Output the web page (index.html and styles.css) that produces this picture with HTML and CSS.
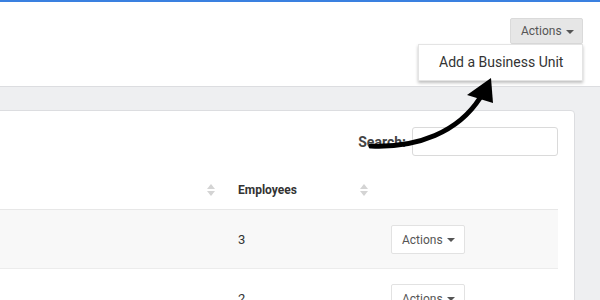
FILE: index.html
```html
<!DOCTYPE html>
<html lang="en">
<head>
    <meta charset="UTF-8">
    <meta name="viewport" content="width=device-width, initial-scale=1.0">
    <title>Business Units</title>
    <link rel="stylesheet" href="styles.css">
</head>
<body>
    <div class="topbar"></div>

    <header class="page-header">
        <div class="dropdown">
            <button class="btn btn-gray">Actions <span class="caret"></span></button>
            <ul class="dropdown-menu">
                <li>Add a Business Unit</li>
            </ul>
        </div>
    </header>

    <div class="subbar"></div>

    <main class="content">
        <div class="card">
            <div class="search-row">
                <label class="search-label">Search:</label>
                <input type="text" class="search-input">
            </div>

            <table class="units">
                <thead>
                    <tr>
                        <th class="col-name"><span class="sort sort-first"></span></th>
                        <th class="col-emp">Employees <span class="sort"></span></th>
                        <th class="col-act"></th>
                    </tr>
                </thead>
                <tbody>
                    <tr class="odd">
                        <td></td>
                        <td>3</td>
                        <td><button class="btn btn-white">Actions <span class="caret"></span></button></td>
                    </tr>
                    <tr>
                        <td></td>
                        <td>2</td>
                        <td><button class="btn btn-white">Actions <span class="caret"></span></button></td>
                    </tr>
                </tbody>
            </table>
        </div>
    </main>

    <!-- Hint arrow pointing at the menu item -->
    <svg class="hint-arrow" width="600" height="300" viewBox="0 0 600 300">
        <path d="M371 146 C 418 148, 458 132, 480 98" fill="none" stroke="#000" stroke-width="5" stroke-linecap="round"/>
        <polygon points="491,78 467,95 493,103" fill="#000"/>
    </svg>
</body>
</html>
```

FILE: styles.css
```css
body {
    margin: 0;
    font-family: Roboto, "Liberation Sans", Arial, sans-serif;
    color: #333;
    background-color: #eeeff1;
    overflow: hidden;
}
.topbar {
    height: 2px;
    background-color: #3a80e0;
}
.page-header {
    height: 84px;
    background-color: #fff;
    border-bottom: 1px solid #dcdde0;
    display: flex;
    justify-content: flex-end;
    align-items: flex-start;
    padding-right: 17px;
}
.dropdown {
    position: relative;
    margin-top: 16px;
}
.btn {
    font-family: inherit;
    font-size: 12px;
    color: #555;
    padding: 0 10px;
    border-radius: 2px;
    display: inline-flex;
    align-items: center;
    gap: 4px;
    cursor: pointer;
}
.btn-gray {
    background-color: #e6e6e6;
    border: 1px solid #dadada;
    width: 73px;
    height: 26px;
}
.btn-white {
    background-color: #fff;
    border: 1px solid #e2e2e2;
    width: 74px;
    height: 29px;
    margin-top: 1px;
}
.caret {
    width: 0;
    height: 0;
    border-left: 4px solid transparent;
    border-right: 4px solid transparent;
    border-top: 4px solid #555;
    margin-top: 1px;
}
.dropdown-menu {
    position: absolute;
    top: 26px;
    right: 0;
    width: 163px;
    margin: 0;
    padding: 0;
    list-style: none;
    background-color: #fff;
    border: 1px solid #e4e4e4;
    box-shadow: 0 2px 3px rgba(0, 0, 0, 0.25);
}
.dropdown-menu li {
    font-size: 14px;
    line-height: 35px;
    padding-left: 20px;
    color: #333;
}
.subbar {
    height: 23px;
}
.content {
    display: flex;
    padding-right: 25px;
}
.card {
    flex: 1;
    margin-left: -40px;
    background-color: #fff;
    border: 1px solid #dcdde0;
    border-radius: 4px;
    padding: 16px 16px 0 16px;
    height: 400px;
}
.search-row {
    display: flex;
    justify-content: flex-end;
    align-items: center;
    gap: 6px;
}
.search-label {
    font-size: 14px;
    font-weight: bold;
    color: #444;
}
.search-input {
    width: 146px;
    height: 29px;
    box-sizing: border-box;
    border: 1px solid #dadada;
    border-radius: 3px;
    margin: 0;
}
.units {
    width: 100%;
    border-collapse: collapse;
    margin-top: 12px;
}
.units th {
    height: 38px;
    padding: 3px 12px 0 12px;
    font-size: 12px;
    font-weight: bold;
    text-align: left;
    color: #333;
    border-bottom: 1px solid #e7e7e7;
    position: relative;
}
.units td {
    height: 58px;
    font-size: 13px;
    padding: 0 12px;
    border-bottom: 1px solid #ececec;
}
.units tr.odd td {
    background-color: #f8f8f8;
}
.col-emp {
    width: 126px;
}
.col-act {
    width: 158px;
}
.units td:last-child {
    padding-left: 15px;
}
.sort {
    position: absolute;
    right: 8px;
    top: 16px;
    width: 0;
    height: 0;
    border-left: 4px solid transparent;
    border-right: 4px solid transparent;
    border-bottom: 5px solid #d4d4d4;
}
.sort-first {
    right: 11px;
}
.sort::after {
    content: "";
    position: absolute;
    left: -4px;
    top: 7px;
    border-left: 4px solid transparent;
    border-right: 4px solid transparent;
    border-top: 5px solid #d4d4d4;
}
.hint-arrow {
    position: absolute;
    left: 0;
    top: 0;
    pointer-events: none;
}
```
